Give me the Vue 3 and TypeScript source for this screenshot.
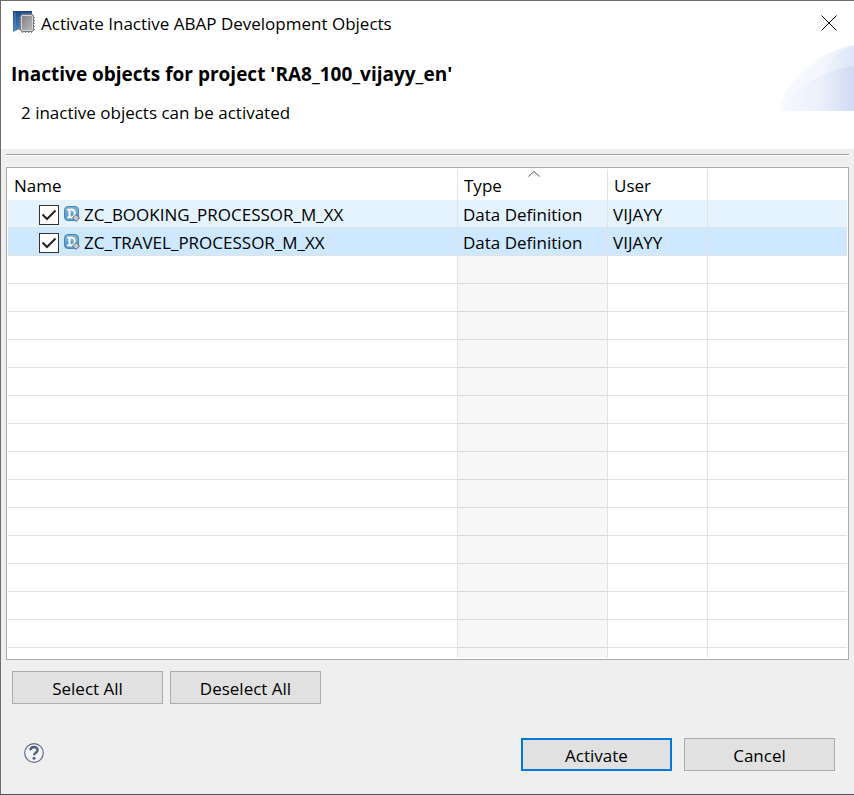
<script setup lang="ts">
import { ref } from 'vue'

interface InactiveObject {
  name: string
  type: string
  user: string
  checked: boolean
}

const objects = ref<InactiveObject[]>([
  { name: 'ZC_BOOKING_PROCESSOR_M_XX', type: 'Data Definition', user: 'VIJAYY', checked: true },
  { name: 'ZC_TRAVEL_PROCESSOR_M_XX', type: 'Data Definition', user: 'VIJAYY', checked: true },
])
const selected = ref(1)

function setAll(value: boolean): void {
  objects.value.forEach((o) => (o.checked = value))
}
</script>

<template>
  <main class="dialog">
    <header class="banner">
      <div class="titlebar">
        <svg class="app-icon" viewBox="0 0 24 24" aria-hidden="true">
          <defs>
            <linearGradient id="app-blue" x1="0" y1="0" x2="0" y2="1">
              <stop offset="0" stop-color="#1b4a85" />
              <stop offset="1" stop-color="#4d84bd" />
            </linearGradient>
            <linearGradient id="app-chip" x1="0" y1="0" x2="1" y2="1">
              <stop offset="0" stop-color="#77797c" />
              <stop offset="1" stop-color="#bfc0c3" />
            </linearGradient>
          </defs>
          <path d="M1 0h19v12L1 21z" fill="url(#app-blue)" />
          <path d="M3 1.500v18" stroke="#6d9bcb" opacity=".7" />
          <path d="M10.500 2v20M13.500 2v20M16.500 2v20M19.500 2v20M7 6.500h16M7 9.500h16M7 12.500h16M7 15.500h16M7 18.500h16" stroke="#85878a" stroke-width="1.200" />
          <rect x="8.500" y="3.500" width="13" height="17" rx="2" fill="url(#app-chip)" stroke="#77797c" />
          <rect x="9.500" y="4.500" width="11" height="15" rx="1.500" fill="none" stroke="#d5d6d8" />
        </svg>
        <span class="title">Activate Inactive ABAP Development Objects</span>
        <button class="close" type="button" aria-label="Close">
          <svg viewBox="0 0 16 16" aria-hidden="true">
            <path d="M.5.5l15 15M15.500.5l-15 15" stroke="#000" />
          </svg>
        </button>
      </div>
      <div class="intro">
        <div class="messages">
          <h1>Inactive objects for project 'RA8_100_vijayy_en'</h1>
          <p>2 inactive objects can be activated</p>
        </div>
        <svg class="swoosh" viewBox="0 0 75 66" aria-hidden="true">
          <defs>
            <linearGradient id="sw-a" x1="0" x2="1">
              <stop offset="0" stop-color="#f8fafe" />
              <stop offset=".6" stop-color="#f3f6fd" />
              <stop offset="1" stop-color="#e6edfa" />
            </linearGradient>
            <linearGradient id="sw-c" x1="0" x2="1">
              <stop offset="0" stop-color="#f1f5fc" />
              <stop offset="1" stop-color="#dde6f8" />
            </linearGradient>
            <linearGradient id="sw-b" x1="0" x2="1">
              <stop offset="0" stop-color="#f8fafe" />
              <stop offset=".55" stop-color="#ebf0fb" />
              <stop offset="1" stop-color="#cfdbf4" />
            </linearGradient>
          </defs>
          <path d="M0 66C2 40 44 3 75 0V66z" fill="url(#sw-a)" />
          <path d="M42 34C49 16 61 3 75 1V34z" fill="url(#sw-c)" />
          <path d="M0 66C14 42 46 25 75 21V66z" fill="url(#sw-b)" />
        </svg>
      </div>
    </header>

    <section class="content">
      <hr />
      <div class="grid-panel">
        <table>
          <colgroup>
            <col class="c-name" />
            <col class="c-type" />
            <col class="c-user" />
            <col />
          </colgroup>
          <thead>
            <tr>
              <th scope="col">Name</th>
              <th scope="col" class="sorted" aria-sort="ascending">
                Type
                <svg class="sort" viewBox="0 0 12 6" aria-hidden="true">
                  <path d="M.5 5.500L6 .5l5.500 5" fill="none" stroke="#555" />
                </svg>
              </th>
              <th scope="col">User</th>
              <td></td>
            </tr>
          </thead>
          <tbody>
            <tr
              v-for="(o, i) in objects"
              :key="o.name"
              :class="{ selected: i === selected }"
              @click="selected = i"
            >
              <td>
                <label class="object">
                  <span class="tick">
                    <input v-model="o.checked" type="checkbox" />
                    <svg v-if="o.checked" viewBox="0 0 20 20" aria-hidden="true">
                      <path d="M3.500 9.500l4.500 4.500 8.500-8.500" fill="none" stroke="#222" stroke-width="2" />
                    </svg>
                  </span>
                  <svg class="ddl" viewBox="0 0 16 16" aria-hidden="true">
                    <rect x=".5" y=".5" width="14" height="14" rx="3.500" fill="#5f9fcd" stroke="#4a87b5" />
                    <path d="M1 5a4 4 0 0 1 4-4h5a4 4 0 0 1 4 4v2H1z" fill="#86b9dc" opacity=".6" />
                    <path d="M3 3.500h5M3 11.500h5" stroke="#fff" stroke-width="1.300" />
                    <path d="M5.500 3.500v8M7 3.500c5 0 5 8 0 8" fill="none" stroke="#fff" stroke-width="2" />
                    <path d="M12 8.500l3.500 3.500-3.500 3.500L8.500 12z" fill="#c3c8d2" stroke="#5c6472" />
                  </svg>
                  <span>{{ o.name }}</span>
                </label>
              </td>
              <td>{{ o.type }}</td>
              <td>{{ o.user }}</td>
              <td></td>
            </tr>
          </tbody>
        </table>
        <div class="empty-rows" aria-hidden="true">
          <div></div>
          <div class="shade"></div>
          <div></div>
          <div></div>
        </div>
      </div>

      <div class="selection">
        <button class="btn" type="button" @click="setAll(true)">Select All</button>
        <button class="btn" type="button" @click="setAll(false)">Deselect All</button>
      </div>
    </section>

    <footer class="actions">
      <button class="help" type="button" aria-label="Help">
        <svg viewBox="0 0 20 20" aria-hidden="true">
          <circle cx="10" cy="10" r="9.300" fill="#f4f4f5" stroke="#5a6b8c" stroke-width="1.200" />
          <path d="M6.500 7.300C6.500 3 13.600 3 13.600 7c0 2.700-3.500 2.600-3.500 5.200" fill="none" stroke="#4f6085" stroke-width="2.400" />
          <circle cx="10" cy="15.200" r="1.500" fill="#4f6085" />
        </svg>
      </button>
      <button class="btn primary" type="button">Activate</button>
      <button class="btn" type="button">Cancel</button>
    </footer>
  </main>
</template>

<style>
body {
  margin: 0;
}
</style>

<style scoped>
.dialog {
  box-sizing: border-box;
  min-height: 100vh;
  display: flex;
  flex-direction: column;
  border: 1px solid #6e6b6e;
  border-right: 0;
  border-bottom-color: #4c5266;
  background: #efefef;
  color: #000;
  font-family: 'Open Sans', 'Noto Sans', sans-serif;
  font-size: 17px;
  line-height: 24px;
}

button {
  font: inherit;
  color: inherit;
}

.banner {
  height: 148px;
  background: #fff;
}

.titlebar {
  display: flex;
  align-items: center;
  height: 44px;
  padding: 0 17px 0 11px;
}

.app-icon {
  width: 24px;
  height: 24px;
  margin-right: 5px;
}

.title {
  flex: 1;
  padding-top: 2px;
  white-space: nowrap;
}

.close {
  display: flex;
  padding: 0;
  border: 0;
  background: none;
}

.close svg {
  width: 16px;
  height: 16px;
}

.intro {
  display: flex;
  justify-content: space-between;
}

.messages {
  padding: 17px 0 0 10px;
  white-space: nowrap;
}

h1 {
  margin: 0 0 15px;
  font-size: 19px;
  font-weight: 700;
  line-height: 24px;
}

p {
  margin: 0 0 0 10px;
}

.swoosh {
  flex: none;
  width: 75px;
  height: 66px;
}

.content {
  flex: 1;
  display: flex;
  flex-direction: column;
  padding: 5px 5px 0;
}

hr {
  width: 100%;
  height: 1px;
  margin: 0 0 11px;
  border: 0;
  border-bottom: 1px solid #fff;
  background: #a0a0a0;
}

.grid-panel {
  flex: 1;
  display: flex;
  flex-direction: column;
  padding: 1px;
  border: 1px solid #a9abb0;
  background: #fff;
}

table {
  width: 100%;
  table-layout: fixed;
  border-collapse: separate;
  border-spacing: 0;
}

.c-name {
  width: 450px;
}

.c-type {
  width: 150px;
}

.c-user {
  width: 100px;
}

th,
td {
  box-sizing: border-box;
  height: 28px;
  padding: 2px 0 0 5px;
  border-right: 1px solid #e2e2e2;
  border-bottom: 1px solid #e2e2e2;
  text-align: left;
  font-weight: 400;
  white-space: nowrap;
}

th,
thead td {
  height: 31px;
  padding: 3px 0 0 6px;
  border-bottom: 0;
}

th:last-child,
td:last-child {
  border-right: 0;
}

.sorted {
  position: relative;
}

.sort {
  position: absolute;
  top: 2px;
  left: 70px;
  width: 12px;
  height: 6px;
}

tbody tr {
  background: #e5f3ff;
}

tbody tr.selected {
  background: #cde8ff;
}

.object {
  display: flex;
  align-items: center;
  padding-left: 26px;
}

.tick {
  display: grid;
  margin-right: 5px;
}

.tick > * {
  grid-area: 1 / 1;
  width: 20px;
  height: 20px;
}

.tick svg {
  pointer-events: none;
}

.tick input {
  appearance: none;
  box-sizing: border-box;
  margin: 0;
  border: 1px solid #333;
  background: #fff;
}

.ddl {
  width: 16px;
  height: 16px;
  margin: 0 4px 2px 0;
}

.empty-rows {
  flex: 1;
  display: grid;
  grid-template-columns: 450px 150px 100px 1fr;
  background: repeating-linear-gradient(transparent 0 27px, #e2e2e2 27px 28px);
}

.empty-rows div {
  border-right: 1px solid #e2e2e2;
}

.empty-rows div:last-child {
  border-right: 0;
}

.empty-rows .shade {
  background: rgba(0, 0, 0, 0.03);
}

.selection {
  display: flex;
  gap: 7px;
  padding: 11px 6px 0;
}

.btn {
  width: 151px;
  height: 33px;
  padding: 2px 0 0;
  border: 1px solid #adadad;
  background: #e1e1e1;
}

.btn.primary {
  border: 2px solid #0078d7;
}

.actions {
  display: flex;
  align-items: flex-start;
  gap: 12px;
  padding: 34px 19px 23px 23px;
}

.help {
  display: flex;
  margin-right: auto;
  padding: 5px 0 0;
  border: 0;
  background: none;
}

.help svg {
  width: 20px;
  height: 20px;
}
</style>
